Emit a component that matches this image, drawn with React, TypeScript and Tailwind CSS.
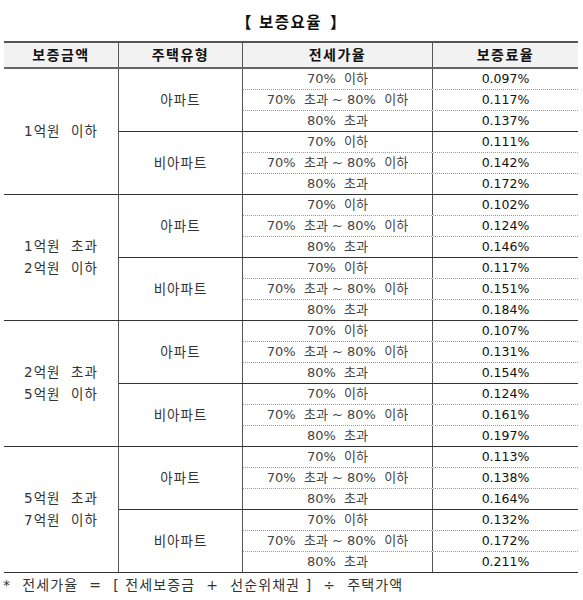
import React from "react";

const groups = [
  { label: ["1억원 이하"], rates: [["0.097%", "0.117%", "0.137%"], ["0.111%", "0.142%", "0.172%"]] },
  { label: ["1억원 초과", "2억원 이하"], rates: [["0.102%", "0.124%", "0.146%"], ["0.117%", "0.151%", "0.184%"]] },
  { label: ["2억원 초과", "5억원 이하"], rates: [["0.107%", "0.131%", "0.154%"], ["0.124%", "0.161%", "0.197%"]] },
  { label: ["5억원 초과", "7억원 이하"], rates: [["0.113%", "0.138%", "0.164%"], ["0.132%", "0.172%", "0.211%"]] },
];

const types = ["아파트", "비아파트"];
const ratios = ["70%  이하", "70%  초과 ~ 80%  이하", "80%  초과"];

const font = { fontFamily: '"DejaVu Sans", "Noto Sans CJK KR", sans-serif' };

export default function App() {
  return (
    <div className="w-[583px] h-[600px] bg-white text-[#333]" style={font}>
      <div className="h-[41px] flex items-center justify-center pt-[6px] text-[15.5px] font-bold text-[#111] tracking-[1.5px] whitespace-pre">
        <span className="font-black">【</span>
        <span className="ml-[6px] mr-[8px]">보증요율</span>
        <span className="font-black">】</span>
      </div>
      <div className="ml-[4px] w-[574px]">
        <div className="flex h-[28px] border-t-2 border-b-2 border-t-[#555] border-b-[#666] bg-[#f2f2f2] text-[14px] font-bold text-[#111] tracking-[1.5px]">
          <div className="w-[115px] border-r border-[#555] flex items-center justify-center">보증금액</div>
          <div className="w-[124px] border-r border-[#555] flex items-center justify-center">주택유형</div>
          <div className="w-[190px] border-r border-[#555] flex items-center justify-center">전세가율</div>
          <div className="flex-1 flex items-center justify-center">보증료율</div>
        </div>
        {groups.map((g, gi) => (
          <div key={gi} className="flex border-b border-[#333]">
            <div className="w-[115px] border-r border-[#555] flex flex-col items-center justify-center text-[13.5px] leading-[22px] tracking-[1px] pb-[2px]">
              {g.label.map((l, i) => (
                <div key={i} className="whitespace-pre">{l.replace(" ", "  ")}</div>
              ))}
            </div>
            <div className="flex-1 flex flex-col">
              {types.map((t, ti) => (
                <div key={ti} className={`flex ${ti === 0 ? "border-b border-[#333]" : ""}`}>
                  <div className="w-[124px] border-r border-[#555] flex items-center justify-center text-[13.5px] tracking-[1px]">
                    {t}
                  </div>
                  <div className="flex-1 flex flex-col">
                    {ratios.map((r, ri) => (
                      <div
                        key={ri}
                        className={`flex ${ri < 2 ? "h-[21px] border-b border-dotted border-[#999]" : "h-[20px]"}`}
                      >
                        <div className="w-[190px] border-r border-[#555] flex items-center justify-center text-[13px] text-[#444] whitespace-pre">
                          {r}
                        </div>
                        <div className="flex-1 flex items-center justify-center text-[12.5px] text-[#111]">
                          {g.rates[ti][ri]}
                        </div>
                      </div>
                    ))}
                  </div>
                </div>
              ))}
            </div>
          </div>
        ))}
      </div>
      <div className="pl-[3px] pt-[2px] text-[14px] text-[#333] tracking-[1.1px] whitespace-pre">
        {"*  전세가율  =  [ 전세보증금  +  선순위채권 ]  ÷  주택가액"}
      </div>
    </div>
  );
}
